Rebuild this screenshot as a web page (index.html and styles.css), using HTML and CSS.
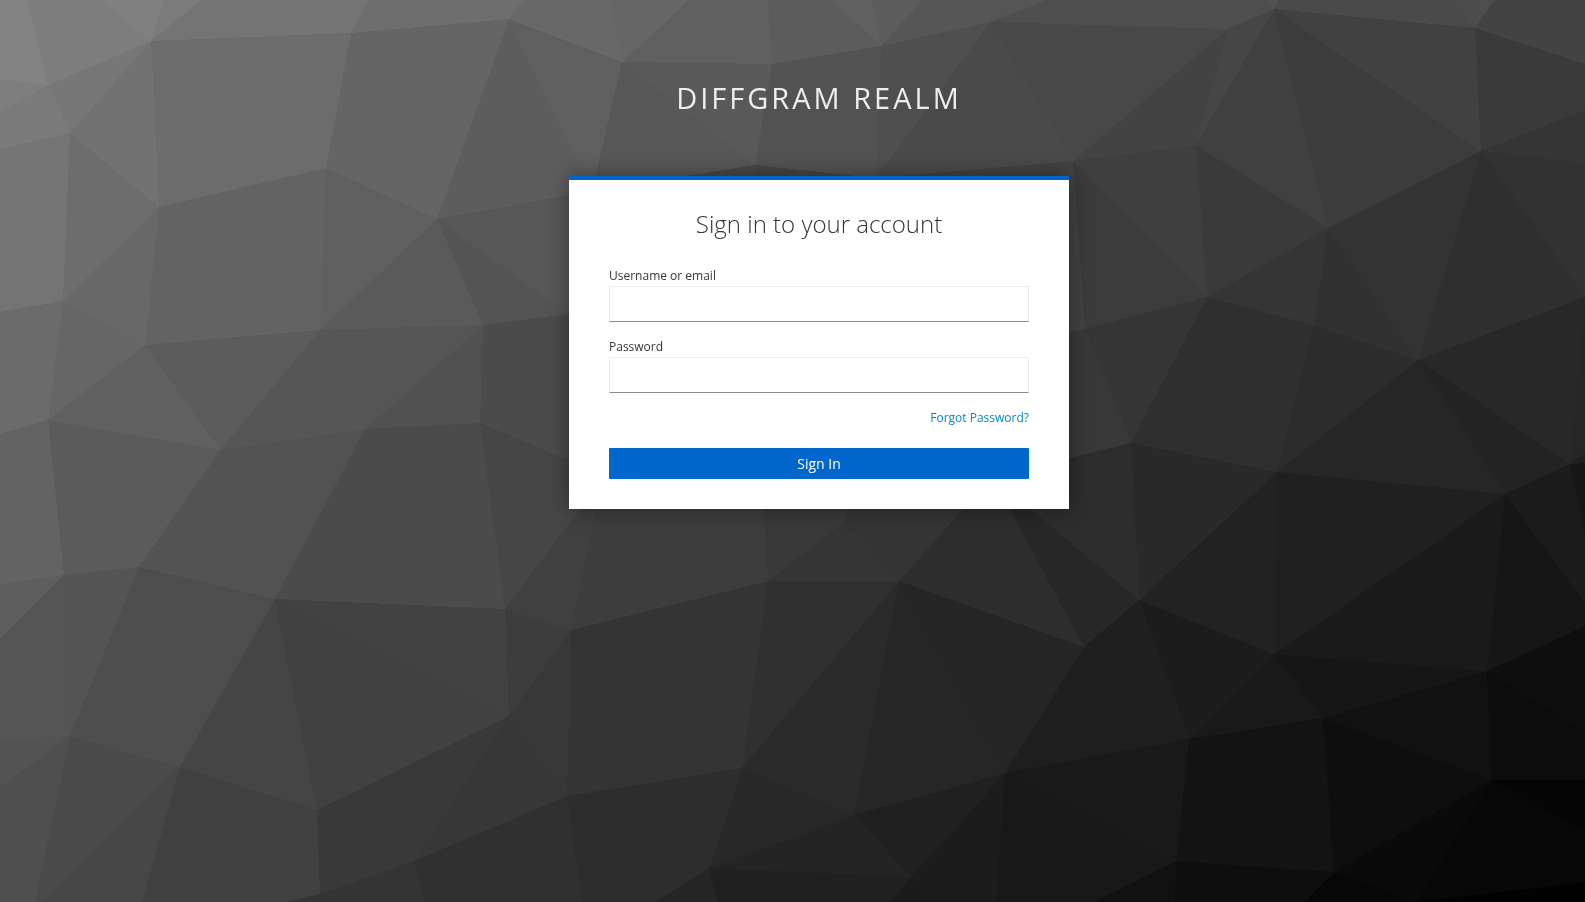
FILE: index.html
```html
<!DOCTYPE html>
<html lang="en">
<head>
  <meta charset="UTF-8">
  <meta name="viewport" content="width=device-width, initial-scale=1">
  <title>Sign in to Diffgram Realm</title>
  <link rel="stylesheet" href="styles.css">
</head>
<body>
  <!-- low-poly backdrop, scales like background-size: cover -->
  <svg class="backdrop" viewBox="0 0 1585 902" preserveAspectRatio="xMidYMid slice" aria-hidden="true">
    <!-- top row -->
    <polygon fill="#838383" points="0,0 27,0 48,85 0,79"/>
    <polygon fill="#7d7d7d" points="27,0 100,0 151,41 48,85"/>
    <polygon fill="#808080" points="100,0 164,0 151,41"/>
    <polygon fill="#7b7b7b" points="164,0 201,0 151,41"/>
    <polygon fill="#747474" points="201,0 369,0 351,33 151,41"/>
    <polygon fill="#6e6e6e" points="369,0 523,0 509,19 351,33"/>
    <polygon fill="#686868" points="523,0 610,0 622,62 509,19"/>
    <polygon fill="#666666" points="610,0 689,0 622,62"/>
    <polygon fill="#5f5f5f" points="689,0 768,0 772,64 622,62"/>
    <polygon fill="#5c5c5c" points="768,0 833,0 881,46 772,64"/>
    <polygon fill="#606060" points="833,0 871,0 881,46"/>
    <polygon fill="#5d5d5d" points="871,0 922,0 881,46"/>
    <polygon fill="#565656" points="922,0 993,0 990,22 881,46"/>
    <polygon fill="#555555" points="993,0 1048,0 990,22"/>
    <polygon fill="#4e4e4e" points="1048,0 1227,0 1228,29 990,22"/>
    <polygon fill="#4d4d4d" points="1227,0 1266,0 1274,9 1228,29"/>
    <polygon fill="#525252" points="1266,0 1279,0 1274,9"/>
    <polygon fill="#4a4a4a" points="1279,0 1453,0 1475,28 1274,9"/>
    <polygon fill="#4c4c4c" points="1453,0 1481,0 1475,28"/>
    <polygon fill="#4d4d4d" points="1481,0 1494,0 1475,28"/>
    <polygon fill="#434343" points="1494,0 1585,0 1585,64 1475,28"/>

    <!-- upper left -->
    <polygon fill="#7e7e7e" points="0,79 48,85 0,112"/>
    <polygon fill="#7a7a7a" points="0,112 48,85 70,133 0,149"/>
    <polygon fill="#777777" points="48,85 151,41 70,133"/>
    <polygon fill="#727272" points="70,133 151,41 159,207"/>
    <polygon fill="#6c6c6c" points="151,41 351,33 326,168 159,207"/>
    <polygon fill="#747474" points="0,149 70,133 63,301 0,312"/>
    <polygon fill="#6d6d6d" points="70,133 159,207 63,301"/>
    <polygon fill="#686868" points="159,207 145,345 63,301"/>
    <polygon fill="#666666" points="63,301 145,345 48,420"/>
    <polygon fill="#6b6b6b" points="0,312 63,301 48,420 0,434"/>
    <polygon fill="#636363" points="159,207 326,168 320,330 145,345"/>
    <polygon fill="#656565" points="351,33 509,19 437,219 326,168"/>
    <polygon fill="#5f5f5f" points="326,168 437,219 320,330"/>
    <polygon fill="#5c5c5c" points="145,345 320,330 220,450"/>
    <polygon fill="#606060" points="145,345 220,450 48,420"/>
    <polygon fill="#5a5a5a" points="437,219 483,325 320,330"/>
    <polygon fill="#565656" points="320,330 365,429 220,450"/>
    <polygon fill="#555555" points="320,330 483,325 365,429"/>
    <polygon fill="#515151" points="483,325 480,423 365,429"/>

    <!-- upper middle -->
    <polygon fill="#5d5d5d" points="509,19 592,191 437,219"/>
    <polygon fill="#5f5f5f" points="509,19 622,62 592,191"/>
    <polygon fill="#595959" points="622,62 772,64 755,165"/>
    <polygon fill="#575757" points="622,62 755,165 592,191"/>
    <polygon fill="#525252" points="772,64 881,46 876,178 755,165"/>
    <polygon fill="#4f4f4f" points="881,46 990,22 876,178"/>
    <polygon fill="#4a4a4a" points="990,22 1073,161 876,178"/>
    <polygon fill="#484848" points="990,22 1228,29 1073,161"/>
    <polygon fill="#434343" points="1228,29 1196,145 1073,161"/>
    <polygon fill="#464646" points="1228,29 1274,9 1196,145"/>
    <polygon fill="#575757" points="437,219 592,191 620,352"/>
    <polygon fill="#545454" points="437,219 620,352 600,310 483,325"/>
    <polygon fill="#4b4b4b" points="483,325 600,310 600,473 480,423"/>
    <polygon fill="#484848" points="592,191 755,165 700,480 600,480"/>
    <polygon fill="#464646" points="755,165 876,178 876,480 700,480"/>
    <polygon fill="#424242" points="876,178 1073,161 1085,329 992,480 876,480"/>

    <!-- upper right -->
    <polygon fill="#404040" points="1274,9 1328,228 1196,145"/>
    <polygon fill="#3c3c3c" points="1274,9 1481,151 1328,228"/>
    <polygon fill="#414141" points="1274,9 1475,28 1481,151"/>
    <polygon fill="#3a3a3a" points="1475,28 1585,64 1585,110 1481,151"/>
    <polygon fill="#353535" points="1481,151 1585,110 1585,163"/>
    <polygon fill="#323232" points="1481,151 1585,163 1585,297"/>
    <polygon fill="#2f2f2f" points="1481,151 1585,297 1418,360"/>
    <polygon fill="#333333" points="1328,228 1481,151 1418,360"/>
    <polygon fill="#313131" points="1328,228 1418,360 1314,325"/>
    <polygon fill="#353535" points="1328,228 1314,325 1207,297"/>
    <polygon fill="#3a3a3a" points="1196,145 1328,228 1207,297"/>
    <polygon fill="#3f3f3f" points="1073,161 1196,145 1207,297"/>
    <polygon fill="#3b3b3b" points="1073,161 1207,297 1085,329"/>
    <polygon fill="#353535" points="1085,329 1207,297 1131,443"/>
    <polygon fill="#383838" points="1085,329 1131,443 992,477 992,345"/>
    <polygon fill="#2f2f2f" points="1207,297 1314,325 1277,472 1131,443"/>
    <polygon fill="#2c2c2c" points="1314,325 1418,360 1277,472"/>
    <polygon fill="#282828" points="1585,297 1570,464 1418,360"/>
    <polygon fill="#262626" points="1585,297 1585,453 1570,464"/>
    <polygon fill="#232323" points="1418,360 1570,464 1505,494"/>
    <polygon fill="#262626" points="1418,360 1505,494 1277,472"/>
    <polygon fill="#202020" points="1570,464 1585,453 1585,463"/>

    <!-- lower left -->
    <polygon fill="#636363" points="0,434 48,420 64,575 0,584"/>
    <polygon fill="#5b5b5b" points="48,420 220,450 139,567 64,575"/>
    <polygon fill="#5e5e5e" points="0,584 64,575 0,638"/>
    <polygon fill="#555555" points="0,638 64,575 70,736 0,740"/>
    <polygon fill="#545454" points="64,575 139,567 70,736"/>
    <polygon fill="#535353" points="0,740 70,736 0,787"/>
    <polygon fill="#4f4f4f" points="0,787 70,736 35,902 0,902"/>
    <polygon fill="#4e4e4e" points="139,567 180,767 70,736"/>
    <polygon fill="#4d4d4d" points="139,567 275,599 180,767"/>
    <polygon fill="#4a4a4a" points="70,736 180,767 44,902 35,902"/>
    <polygon fill="#474747" points="180,767 142,902 44,902"/>
    <polygon fill="#535353" points="220,450 275,599 139,567"/>
    <polygon fill="#525252" points="220,450 365,429 275,599"/>
    <polygon fill="#4b4b4b" points="365,429 480,423 505,609 275,599"/>
    <polygon fill="#454545" points="275,599 317,810 180,767"/>
    <polygon fill="#424242" points="275,599 505,609 509,716"/>
    <polygon fill="#414141" points="275,599 509,716 317,810"/>
    <polygon fill="#404040" points="180,767 317,810 320,894 286,902 142,902"/>
    <polygon fill="#393939" points="317,810 509,716 414,861 320,894"/>
    <polygon fill="#343434" points="320,894 414,861 424,902 286,902"/>

    <!-- lower middle -->
    <polygon fill="#464646" points="480,423 600,473 602,480 505,609"/>
    <polygon fill="#404040" points="602,480 571,630 505,609"/>
    <polygon fill="#3d3d3d" points="602,480 762,480 768,581 571,630"/>
    <polygon fill="#393939" points="762,480 860,480 843,523 768,581"/>
    <polygon fill="#343434" points="860,480 992,477 899,581 843,523"/>
    <polygon fill="#353535" points="843,523 899,581 768,581"/>
    <polygon fill="#3c3c3c" points="505,609 571,630 509,716"/>
    <polygon fill="#383838" points="571,630 567,796 509,716"/>
    <polygon fill="#373737" points="509,716 567,796 414,861"/>
    <polygon fill="#303030" points="414,861 567,796 582,902 424,902"/>
    <polygon fill="#343434" points="571,630 768,581 742,768 567,796"/>
    <polygon fill="#2d2d2d" points="567,796 742,768 709,868 655,902 582,902"/>
    <polygon fill="#303030" points="768,581 899,581 742,768"/>
    <polygon fill="#2a2a2a" points="742,768 899,581 854,815"/>
    <polygon fill="#282828" points="742,768 854,815 709,868"/>
    <polygon fill="#242424" points="709,868 854,815 911,877"/>
    <polygon fill="#202020" points="709,868 911,877 891,902 718,902"/>
    <polygon fill="#252525" points="709,868 718,902 655,902"/>
    <polygon fill="#252525" points="899,581 1084,647 1005,773"/>
    <polygon fill="#262626" points="899,581 1005,773 854,815"/>
    <polygon fill="#202020" points="854,815 1005,773 911,877"/>
    <polygon fill="#1c1c1c" points="911,877 1005,773 996,902 937,902"/>
    <polygon fill="#1a1a1a" points="911,877 937,902 891,902"/>
    <polygon fill="#2d2d2d" points="992,477 1084,647 899,581"/>
    <polygon fill="#272727" points="992,477 1139,600 1084,647"/>
    <polygon fill="#2d2d2d" points="992,477 1131,443 1139,600"/>

    <!-- lower right -->
    <polygon fill="#292929" points="1131,443 1277,472 1139,600"/>
    <polygon fill="#222222" points="1277,472 1274,654 1139,600"/>
    <polygon fill="#202020" points="1277,472 1505,494 1274,654"/>
    <polygon fill="#1f1f1f" points="1139,600 1189,739 1084,647"/>
    <polygon fill="#1e1e1e" points="1084,647 1189,739 1005,773"/>
    <polygon fill="#1c1c1c" points="1139,600 1274,654 1189,739"/>
    <polygon fill="#191919" points="1005,773 1189,739 1176,861"/>
    <polygon fill="#181818" points="1005,773 1176,861 1094,902 996,902"/>
    <polygon fill="#191919" points="1274,654 1323,718 1189,739"/>
    <polygon fill="#131313" points="1189,739 1323,718 1334,872 1176,861"/>
    <polygon fill="#0e0e0e" points="1176,861 1334,872 1304,902 1175,902"/>
    <polygon fill="#111111" points="1176,861 1175,902 1094,902"/>
    <polygon fill="#161616" points="1274,654 1487,671 1323,718"/>
    <polygon fill="#1a1a1a" points="1274,654 1505,494 1487,671"/>
    <polygon fill="#161616" points="1505,494 1585,603 1585,626 1487,671"/>
    <polygon fill="#1b1b1b" points="1505,494 1570,464 1585,535 1585,603"/>
    <polygon fill="#171717" points="1570,464 1585,463 1585,535"/>
    <polygon fill="#111111" points="1323,718 1487,671 1491,780"/>
    <polygon fill="#0e0e0e" points="1323,718 1491,780 1334,872"/>
    <polygon fill="#0a0a0a" points="1334,872 1491,780 1416,902"/>
    <polygon fill="#070707" points="1334,872 1416,902 1304,902"/>
    <polygon fill="#0e0e0e" points="1487,671 1585,626 1585,732"/>
    <polygon fill="#0c0c0c" points="1487,671 1585,732 1585,780 1491,780"/>
    <polygon fill="#050505" points="1491,780 1585,780 1585,831"/>
    <polygon fill="#070707" points="1491,780 1585,831 1585,882 1416,902"/>
    <polygon fill="#020202" points="1416,902 1585,882 1585,902"/>
  </svg>

  <div class="login-page">
    <header class="realm-name">Diffgram Realm</header>

    <main class="card">
      <h1>Sign in to your account</h1>

      <form action="#" method="post">
        <div class="form-group">
          <label for="username">Username or email</label>
          <input type="text" id="username" name="username" autocomplete="off">
        </div>
        <div class="form-group">
          <label for="password">Password</label>
          <input type="password" id="password" name="password" autocomplete="off">
        </div>
        <div class="form-options">
          <a href="#">Forgot Password?</a>
        </div>
        <button type="submit" class="btn-primary">Sign In</button>
      </form>
    </main>
  </div>
</body>
</html>
```
FILE: styles.css
```css
* {
  box-sizing: border-box;
}

body {
  margin: 0;
  min-height: 100vh;
  background: #393939;
  font-family: "Open Sans", "Noto Sans", sans-serif;
  font-size: 12px;
  line-height: 20px;
  color: #363636;
}

.backdrop {
  position: fixed;
  top: 0;
  left: 0;
  width: 100%;
  height: 100%;
  z-index: -1;
}

.backdrop polygon {
  shape-rendering: crispEdges;
}

.login-page {
  display: flex;
  flex-direction: column;
  align-items: center;
  padding: 80px 0 40px 53px;
}

.realm-name {
  margin-bottom: 60px;
  font-size: 29px;
  line-height: 36px;
  letter-spacing: 3px;
  text-transform: uppercase;
  color: #ededed;
}

.card {
  width: 100%;
  max-width: 500px;
  padding: 28px 40px 30px;
  background: #fff;
  border-top: 4px solid #06c;
  box-shadow: 0 0 20px rgba(3, 3, 3, 0.4);
}

h1 {
  margin: 0 0 26px;
  font-size: 24px;
  font-weight: 300;
  line-height: 32px;
  text-align: center;
}

.form-group {
  display: flex;
  flex-direction: column;
  margin-bottom: 15px;
}

input {
  width: 100%;
  height: 36px;
  padding: 6px 8px;
  border: 1px solid #ededed;
  border-bottom-color: #8a8d90;
  border-radius: 0;
  background: #fff;
  font-family: inherit;
  font-size: 16px;
  color: inherit;
}

input:focus {
  outline: none;
  border-bottom-color: #06c;
}

.form-options {
  margin-bottom: 20px;
  text-align: right;
}

a {
  color: #0088ce;
  text-decoration: none;
}

a:hover {
  text-decoration: underline;
}

.btn-primary {
  display: block;
  width: 100%;
  height: 31px;
  padding: 0;
  border: none;
  border-radius: 1px;
  background: #06c;
  font-family: inherit;
  font-size: 14px;
  color: #fff;
  cursor: pointer;
}

.btn-primary:hover {
  background: #004080;
}
```
